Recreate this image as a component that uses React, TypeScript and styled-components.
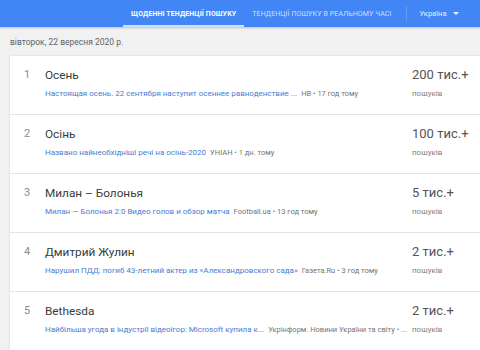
import styled, { createGlobalStyle } from "styled-components";

const GlobalStyle = createGlobalStyle`
  html, body {
    margin: 0;
    padding: 0;
    background: #f1f1f1;
    font-family: Roboto, "Noto Sans", Arial, sans-serif;
  }
`;

const Page = styled.div`
  width: 480px;
  height: 350px;
  overflow: hidden;
  background: #f1f1f1;
`;

const Header = styled.header`
  height: 27px;
  background: #4285f4;
  display: flex;
  align-items: stretch;
  padding-left: 123px;
  box-shadow: 0 1px 2px rgba(0, 0, 0, 0.2);
`;

const Tab = styled.div<{ $active?: boolean }>`
  display: flex;
  align-items: center;
  padding: 0 8px;
  font-size: 7px;
  font-weight: ${(p) => (p.$active ? 700 : 400)};
  letter-spacing: 0.1px;
  text-transform: uppercase;
  color: ${(p) => (p.$active ? "#fff" : "rgba(255,255,255,0.75)")};
  border-bottom: 2px solid
    ${(p) => (p.$active ? "rgba(255,255,255,0.75)" : "transparent")};
  box-sizing: border-box;
  padding-top: 2px;
`;

const Divider = styled.div`
  width: 1px;
  margin: 6px 0 6px 6px;
  background: rgba(255, 255, 255, 0.2);
`;

const Country = styled.div`
  display: flex;
  align-items: center;
  gap: 7px;
  padding-left: 13px;
  font-size: 7.5px;
  color: rgba(255, 255, 255, 0.9);
`;

const Caret = styled.span`
  width: 0;
  height: 0;
  border-left: 3px solid transparent;
  border-right: 3px solid transparent;
  border-top: 3.5px solid rgba(255, 255, 255, 0.9);
`;

const DateLine = styled.div`
  padding: 10px 10px 0;
  height: 29px;
  box-sizing: border-box;
  font-size: 8.5px;
  color: #5f6368;
`;

const Card = styled.div`
  margin-left: 10px;
  background: #fff;
  box-shadow: 0 0 2px rgba(0, 0, 0, 0.12);
`;

const Row = styled.div`
  display: flex;
  height: 59px;
  box-sizing: border-box;
  border-bottom: 1px solid #e4e4e4;
  padding-top: 10px;
`;

const Rank = styled.div`
  width: 35px;
  flex-shrink: 0;
  padding-left: 14px;
  box-sizing: border-box;
  font-size: 11px;
  line-height: 18px;
  color: #8a8a8a;
`;

const Main = styled.div`
  width: 353px;
  flex-shrink: 0;
  display: flex;
  flex-direction: column;
  gap: 4px;
`;

const Title = styled.div`
  font-size: 11.8px;
  line-height: 18px;
  color: #3a3a3a;
`;

const Sub = styled.div`
  display: flex;
  align-items: baseline;
  white-space: nowrap;
  font-size: 8px;
  line-height: 12px;
`;

const Link = styled.span`
  color: #4a7bd3;
  margin-right: 4px;
`;

const Source = styled.span`
  color: #757575;
  font-size: 7.5px;
`;

const Count = styled.div`
  padding-left: 14px;
  display: flex;
  flex-direction: column;
  gap: 4px;
`;

const Value = styled.div`
  font-size: 13px;
  line-height: 18px;
  color: #555;
`;

const Label = styled.div`
  font-size: 8px;
  line-height: 12px;
  color: #808080;
`;

const items = [
  {
    title: "Осень",
    link: "Настоящая осень. 22 сентября наступит осеннее равноденствие ...",
    source: "НВ • 17 год тому",
    value: "200 тис.+",
  },
  {
    title: "Осінь",
    link: "Названо найнеобхідніші речі на осінь-2020",
    source: "УНІАН • 1 дн. тому",
    value: "100 тис.+",
  },
  {
    title: "Милан – Болонья",
    link: "Милан — Болонья 2:0 Видео голов и обзор матча",
    source: "Football.ua • 13 год тому",
    value: "5 тис.+",
  },
  {
    title: "Дмитрий Жулин",
    link: "Нарушил ПДД: погиб 43-летний актер из «Александровского сада»",
    source: "Газета.Ru • 3 год тому",
    value: "2 тис.+",
  },
  {
    title: "Bethesda",
    link: "Найбільша угода в індустрії відеоігор: Microsoft купила к...",
    source: "Укрінформ. Новини України та світу • ...",
    value: "2 тис.+",
  },
];

export default function App() {
  return (
    <Page>
      <GlobalStyle />
      <Header>
        <Tab $active>Щоденні тенденції пошуку</Tab>
        <Tab>Тенденції пошуку в реальному часі</Tab>
        <Divider />
        <Country>
          Україна <Caret />
        </Country>
      </Header>
      <DateLine>вівторок, 22 вересня 2020 р.</DateLine>
      <Card>
        {items.map((it, i) => (
          <Row key={i}>
            <Rank>{i + 1}</Rank>
            <Main>
              <Title>{it.title}</Title>
              <Sub>
                <Link>{it.link}</Link>
                <Source>{it.source}</Source>
              </Sub>
            </Main>
            <Count>
              <Value>{it.value}</Value>
              <Label>пошуків</Label>
            </Count>
          </Row>
        ))}
      </Card>
    </Page>
  );
}
